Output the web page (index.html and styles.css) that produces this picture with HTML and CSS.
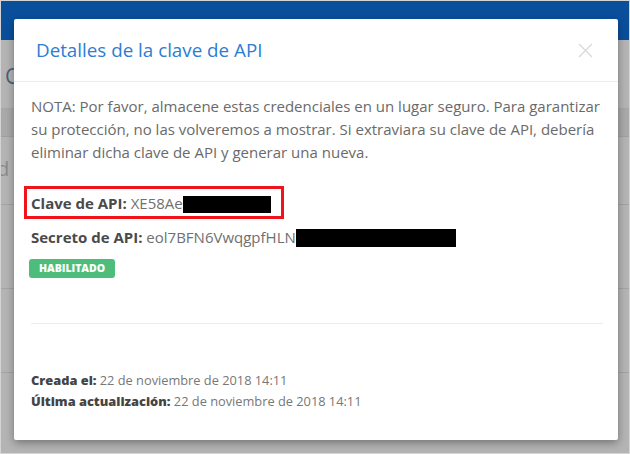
FILE: index.html
```html
<!DOCTYPE html>
<html lang="es">
<head>
<meta charset="utf-8">
<title>Detalles de la clave de API</title>
<link rel="stylesheet" href="styles.css">
</head>
<body>
<div class="frame">
  <div class="page">
    <div class="topbar"></div>
    <div class="behind">
      <div class="behind-title">C</div>
      <div class="behind-band"></div>
      <div class="behind-row behind-text">d</div>
      <div class="behind-row"></div>
      <div class="behind-row"></div>
      <div class="behind-row last"></div>
    </div>
  </div>
  <div class="modal">
    <div class="modal-header">
      <h1 class="modal-title">Detalles de la clave de API</h1>
      <svg class="close" width="15" height="15" viewBox="0 0 15 15"><path d="M1 1L14 14M14 1L1 14" stroke="#d9d9d9" stroke-width="1.3" fill="none"/></svg>
    </div>
    <div class="modal-body">
      <p class="note">NOTA: Por favor, almacene estas credenciales en un lugar seguro. Para garantizar su protección, no las volveremos a mostrar. Si extraviara su clave de API, debería eliminar dicha clave de API y generar una nueva.</p>
      <div class="field key">
        <b>Clave de API:</b> XE58Ae<span class="redact r1"></span>
        <span class="highlight"></span>
      </div>
      <div class="field">
        <b>Secreto de API:</b> eol7BFN6VwqgpfHLN<span class="redact r2"></span>
      </div>
      <div class="badge-row"><span class="badge">HABILITADO</span></div>
      <hr class="divider">
      <div class="meta">
        <div><b>Creada el:</b> 22 de noviembre de 2018 14:11</div>
        <div><b>Última actualización:</b> 22 de noviembre de 2018 14:11</div>
      </div>
    </div>
  </div>
</div>
</body>
</html>
```
FILE: styles.css
```css
* { box-sizing: border-box; }
html, body { margin: 0; padding: 0; background: #fff; }
body { font-family: "Open Sans", "Lato", sans-serif; }

.frame {
  position: relative;
  width: 630px;
  height: 454px;
  border: 1px solid #d4d4d4;
  overflow: hidden;
  background: #b4b4b4;
}
.page { display: flex; flex-direction: column; height: 100%; }
.topbar { height: 39px; background: #0a4f9c; flex: none; }
.behind { flex: 1; display: flex; flex-direction: column; }
.behind-title {
  height: 69px;
  padding: 24px 0 0 4px;
  font-size: 21px;
  color: #4d5f73;
  line-height: 24px;
  border-bottom: 1px solid #a6a6a6;
}
.behind-band { height: 28px; background: #a9a9a9; border-bottom: 1px solid #a0a0a0; }
.behind-row {
  height: 84px;
  border-bottom: 1px solid #a3a3a3;
  flex: none;
}
.behind-row.last { height: 95px; border-bottom: 1px solid #a8a8a8; }
.behind-text {
  height: 68px;
  font-size: 20px;
  color: #8a8a8a;
  padding: 20px 0 0 0;
  margin-left: -4px;
  line-height: 24px;
}

.modal {
  position: absolute;
  left: 13px;
  top: 18px;
  width: 604px;
  height: 421px;
  background: #fff;
  border-radius: 2px;
  box-shadow: 0 3px 8px rgba(0,0,0,0.35);
}
.modal-header {
  height: 63px;
  border-bottom: 1px solid #ececec;
  display: flex;
  align-items: center;
  justify-content: space-between;
  padding: 0 25px 0 22px;
}
.modal-title {
  margin: 0;
  font-size: 18.8px;
  font-weight: 400;
  color: #2d7dd2;
}

.modal-body { padding: 13px 12px 0 17px; color: #666; font-size: 15px; }
.note { margin: 0; line-height: 23px; color: #6a6a6a; }

.field { line-height: 20px; color: #707070; }
.field b { color: #4a4a4a; font-weight: 700; }
.field.key { position: relative; margin-top: 29px; }
.field + .field { margin-top: 14px; }
.redact { display: inline-block; vertical-align: -4px; background: #000; height: 17px; }
.r1 { width: 88px; }
.r2 { width: 160px; height: 18px; }
.highlight {
  position: absolute;
  left: -7px;
  top: -7px;
  width: 260px;
  height: 33px;
  border: 3px solid #f0141a;
}

.badge-row { display: flex; margin-top: 12px; margin-left: -2px; }
.badge {
  height: 19px;
  background: #4dbd7b;
  color: #fff;
  font-size: 10.5px;
  font-weight: 800;
  padding: 0 10px;
  border-radius: 3px;
  line-height: 19px;
}
.divider { border: 0; border-top: 1px solid #ececec; margin: 45px 3px 0 0; }
.meta { margin-top: 46px; font-size: 12.8px; line-height: 21px; color: #777; }
.meta b { color: #444; font-weight: 800; }
```
